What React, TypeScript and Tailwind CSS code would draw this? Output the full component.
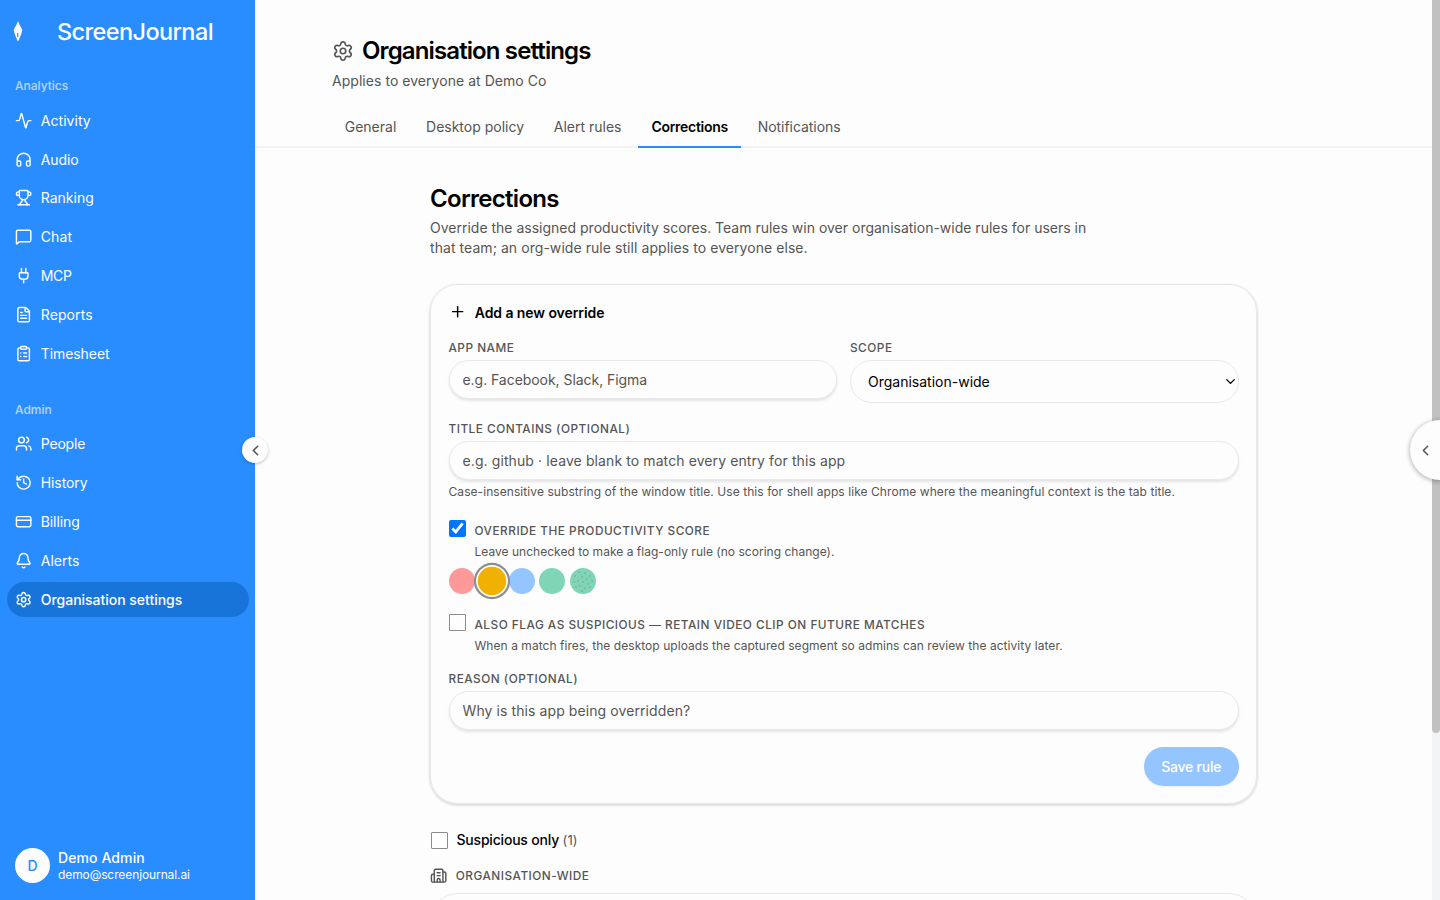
import React, { useState } from 'react';
import {
  Activity,
  Bell,
  Building2,
  ChevronDown,
  ChevronLeft,
  ClipboardList,
  CreditCard,
  FileText,
  Headphones,
  History,
  MessageSquare,
  Plug,
  Plus,
  Settings,
  Trophy,
  Users,
} from 'lucide-react';

const analytics = [
  { label: 'Activity', icon: Activity, track: 'tracking-[0.05px]' },
  { label: 'Audio', icon: Headphones, track: 'tracking-[-0.1px]' },
  { label: 'Ranking', icon: Trophy, track: 'tracking-[0px]' },
  { label: 'Chat', icon: MessageSquare, track: 'tracking-[0.1px]' },
  { label: 'MCP', icon: Plug, track: 'tracking-[-0.3px]' },
  { label: 'Reports', icon: FileText, track: 'tracking-[0.1px]' },
  { label: 'Timesheet', icon: ClipboardList, track: 'tracking-[-0.08px]' },
];

const admin = [
  { label: 'People', icon: Users, track: 'tracking-[-0.2px]' },
  { label: 'History', icon: History, track: 'tracking-[-0.1px]' },
  { label: 'Billing', icon: CreditCard, track: 'tracking-[-0.1px]' },
  { label: 'Alerts', icon: Bell, track: 'tracking-[0px]' },
  { label: 'Organisation settings', icon: Settings, track: 'tracking-[-0.02px]', active: true },
];

const tabs = [
  { label: 'General', style: 'w-[77px]' },
  { label: 'Desktop policy', style: 'w-[123.500px]' },
  { label: 'Alert rules', style: 'w-[93px]' },
  { label: 'Corrections', style: 'w-[102.500px] tracking-[-0.28px]' },
  { label: 'Notifications', style: 'w-[108px] tracking-[-0.05px]' },
];

const scores = [
  'bg-[#fe9999]',
  'bg-[#f0b100]',
  'bg-[#94c5ff]',
  'bg-[#80d5b7]',
  'bg-[#80d5b7]',
];

const speckles = [
  [9, 4], [15, 5], [20, 8], [5, 8], [12, 9], [17, 11], [22, 13], [8, 13],
  [4, 14], [13, 14], [18, 16], [10, 18], [6, 19], [15, 20], [20, 19], [12, 23],
];

function NavList({ items }: { items: any[] }) {
  return (
    <ul className="flex flex-col gap-[4.32px] px-[6.5px]">
      {items.map(({ label, icon: Icon, track, active }) => (
        <li
          key={label}
          className={`flex h-[34.56px] items-center gap-[8.5px] rounded-full px-[8.5px] text-[14px] ${track} ${
            active ? 'bg-[#1874d9] font-medium' : ''
          }`}
        >
          <Icon className="size-[17.28px] shrink-0" strokeWidth={2} />
          <span className="whitespace-nowrap">{label}</span>
        </li>
      ))}
    </ul>
  );
}

function FieldLabel({ children }: { children: React.ReactNode }) {
  return (
    <div className="h-[16px] text-[11.8px] leading-[16px] font-medium tracking-[0.5px] whitespace-nowrap text-[#555] uppercase">
      {children}
    </div>
  );
}

const inputClass =
  'block h-[39px] w-full rounded-full border border-[#e9e9ec] bg-[#fdfdfd] px-[13px] text-[14px] shadow-[0_2px_3px_rgba(0,0,0,0.10)] placeholder:text-[#555] outline-none';

const checkboxClass =
  'size-[17px] shrink-0 appearance-none rounded-[1px] border border-[#8a8a8a] bg-[#fdfdfd] checked:appearance-auto';

export default function App() {
  const [tab, setTab] = useState('Corrections');
  const [score, setScore] = useState(1);

  return (
    <div className="relative flex h-[900px] w-[1440px] overflow-hidden bg-[#fdfdfd] font-['Inter',sans-serif] text-black">
      {/* Sidebar */}
      <aside className="flex h-full w-[255px] shrink-0 flex-col bg-[#298cff] text-white">
        <div className="flex h-[62px] items-center pl-[13px]">
          <svg className="-mt-px h-[20px] w-[10px]" viewBox="0 0 10 20" fill="currentColor">
            <path
              fillRule="evenodd"
              d="M5 0C6.2 3.4 8 6 9.3 9C8.8 12.6 7 15.500 5.600 19.800H4.400C3 15.500 1.200 12.600 .7 9C2 6 3.800 3.400 5 0ZM4.100 12V16H5.300V12Z"
            />
          </svg>
          <span className="mt-[2px] ml-[34px] text-[23.5px] leading-8 font-medium tracking-[-0.6px]">
            ScreenJournal
          </span>
        </div>
        <div className="mt-[16px] mb-[9px] h-4 pl-[15px] text-[12px] leading-4 font-medium text-white/65">
          Analytics
        </div>
        <NavList items={analytics} />
        <div className="mt-[31px] mb-[9px] h-4 pl-[15px] text-[12px] leading-4 font-medium text-white/65">Admin</div>
        <NavList items={admin} />
        <div className="mt-auto mb-[17px] flex items-center gap-[8px] pl-[15px]">
          <div className="flex size-[35px] items-center justify-center rounded-full bg-[#fdfdfd] text-[14px] font-medium text-[#298cff]">
            D
          </div>
          <div className="flex flex-col">
            <span className="text-[14px] leading-[18px] font-medium tracking-[0.1px]">Demo Admin</span>
            <span className="text-[12px] leading-[15px] tracking-[-0.1px]">demo@screenjournal.ai</span>
          </div>
        </div>
      </aside>

      {/* Page */}
      <main className="flex h-full min-w-0 flex-1 flex-col">
        <header className="border-b-2 border-[#f2f2f2] pt-[35px] pl-[77px]">
          <div className="flex h-8 items-center gap-[8px]">
            <Settings className="size-[22px] text-[#555]" strokeWidth={1.8} />
            <h1 className="text-[24px] leading-8 font-semibold tracking-[-0.88px]">Organisation settings</h1>
          </div>
          <p className="mt-[4px] h-5 text-[14px] leading-5 tracking-[0.04px] text-[#555]">
            Applies to everyone at Demo Co
          </p>
          <nav className="-mb-[1.5px] mt-[17px] flex gap-[4.3px]">
            {tabs.map((t) => (
              <button
                key={t.label}
                onClick={() => setTab(t.label)}
                className={`flex h-[39.5px] items-center justify-center border-b-2 text-[14px] whitespace-nowrap ${t.style} ${
                  tab === t.label
                    ? 'border-[#298cff] font-semibold'
                    : 'border-transparent text-[#555]'
                }`}
              >
                {t.label}
              </button>
            ))}
          </nav>
        </header>

        <section className="ml-[175px] flex w-[827px] flex-col">
          <h2 className="mt-[35px] h-8 text-[24px] leading-8 font-semibold tracking-[-0.7px]">Corrections</h2>
          <p className="mt-[3px] text-[14px] leading-5 whitespace-nowrap text-[#555]">
            Override the assigned productivity scores. Team rules win over organisation-wide rules for users in
            <br />
            <span className="tracking-[0.06px]">that team; an org-wide rule still applies to everyone else.</span>
          </p>

          <div className="mt-[26px] h-[520px] rounded-[28px] border border-[#e8e8e8] px-[17.5px] pt-[17px] shadow-[0_1px_2px_1px_rgba(0,0,0,0.12)]">
            <div className="flex h-5 items-center gap-[9px]">
              <Plus className="size-[17.28px]" strokeWidth={2} />
              <span className="text-[14px] font-semibold tracking-[-0.08px]">Add a new override</span>
            </div>

            <div className="mt-[18px] grid grid-cols-2 gap-[13px]">
              <div className="flex flex-col gap-[4px]">
                <FieldLabel>App name</FieldLabel>
                <input className={`${inputClass} tracking-[-0.05px]`} placeholder="e.g. Facebook, Slack, Figma" />
              </div>
              <div className="flex flex-col gap-[4px]">
                <FieldLabel>Scope</FieldLabel>
                <div className="relative">
                  <select className="block h-[43px] w-full appearance-none rounded-full border border-[#e9e9ec] bg-[#fdfdfd] pl-[17px] text-[14px]">
                    <option>Organisation-wide</option>
                  </select>
                  <ChevronDown className="pointer-events-none absolute top-[14px] right-[1px] size-[15px]" strokeWidth={2.2} />
                </div>
              </div>
            </div>

            <div className="mt-[18px] flex flex-col gap-[4px]">
              <FieldLabel>Title contains (optional)</FieldLabel>
              <input
                className={`${inputClass} tracking-[0.1px]`}
                placeholder="e.g. github · leave blank to match every entry for this app"
              />
            </div>
            <p className="mt-[4px] h-4 text-[12px] leading-4 tracking-[0.07px] whitespace-nowrap text-[#555]">
              Case-insensitive substring of the window title. Use this for shell apps like Chrome where the meaningful
              context is the tab title.
            </p>

            <div className="mt-[20px] flex items-start gap-[9px]">
              <input type="checkbox" defaultChecked className={checkboxClass} />
              <div className="pt-[3px]">
                <FieldLabel>Override the productivity score</FieldLabel>
                <p className="mt-[5px] h-4 text-[12px] leading-4 tracking-[0.02px] whitespace-nowrap text-[#555]">
                  Leave unchecked to make a flag-only rule (no scoring change).
                </p>
              </div>
            </div>

            <div className="mt-[8px] flex gap-[4.3px]">
              {scores.map((color, i) => (
                <button
                  key={i}
                  onClick={() => setScore(i)}
                  className={`size-[26px] rounded-full ${color} ${
                    score === i ? 'scale-110 shadow-[0_0_0_1.5px_#fdfdfd,0_0_0_3.5px_#8c8c8c]' : ''
                  }`}
                >
                  {i === 4 && (
                    <svg viewBox="0 0 26 26" className="size-[26px]" fill="#7c8f85">
                      {speckles.map(([x, y]) => (
                        <circle key={`${x}-${y}`} cx={x} cy={y} r="0.7" />
                      ))}
                    </svg>
                  )}
                </button>
              ))}
            </div>

            <div className="mt-[20px] flex items-start gap-[9px]">
              <input type="checkbox" className={checkboxClass} />
              <div className="pt-[3px]">
                <FieldLabel>Also flag as suspicious — retain video clip on future matches</FieldLabel>
                <p className="mt-[5px] h-4 text-[12px] leading-4 tracking-[0.05px] whitespace-nowrap text-[#555]">
                  When a match fires, the desktop uploads the captured segment so admins can review the activity later.
                </p>
              </div>
            </div>

            <div className="mt-[17px] flex flex-col gap-[4px]">
              <FieldLabel>Reason (optional)</FieldLabel>
              <input className={`${inputClass} tracking-[0.09px]`} placeholder="Why is this app being overridden?" />
            </div>

            <div className="mt-[17px] flex justify-end">
              <button className="h-[39px] w-[94.5px] rounded-full bg-[#94c5ff] text-[14px] font-medium tracking-[-0.25px] text-white shadow-[0_1px_2px_rgba(0,0,0,0.06)]">
                Save rule
              </button>
            </div>
          </div>

          <label className="mt-[26px] flex h-5 items-center gap-[9px] pl-[0.5px] text-[14px]">
            <input type="checkbox" className={checkboxClass} />
            <span className="font-medium tracking-[-0.2px]">
              Suspicious only <span className="text-[13px] font-normal tracking-[0.1px] text-[#555]">(1)</span>
            </span>
          </label>

          <div className="mt-[18px] flex h-4 items-center gap-[8.5px] text-[#555]">
            <Building2 className="size-[17.28px]" strokeWidth={2} />
            <FieldLabel>Organisation-wide</FieldLabel>
          </div>
          <div className="mt-[9px] h-[80px] shrink-0 rounded-[28px] border border-[#e8e8e8]" />
        </section>
      </main>

      {/* Scrollbar */}
      <div className="h-full w-[8px] shrink-0 bg-[#f2f4f8]">
        <div className="h-[733px] rounded-b-full bg-[#c1c1c1]" />
      </div>

      {/* Collapse handles */}
      <button className="absolute top-[437px] left-[242px] flex size-[26px] items-center justify-center rounded-full bg-[#fdfdfd] text-[#555] shadow-[0_1px_3px_rgba(0,0,0,0.25)]">
        <ChevronLeft className="size-[17px]" strokeWidth={2.3} />
      </button>
      <button className="absolute top-[420px] right-0 flex h-[60px] w-[30px] items-center justify-center rounded-l-full bg-[#fdfdfd] text-[#555] shadow-[0_1px_4px_1px_rgba(0,0,0,0.25)]">
        <ChevronLeft className="size-[17px]" strokeWidth={2.3} />
      </button>
    </div>
  );
}
